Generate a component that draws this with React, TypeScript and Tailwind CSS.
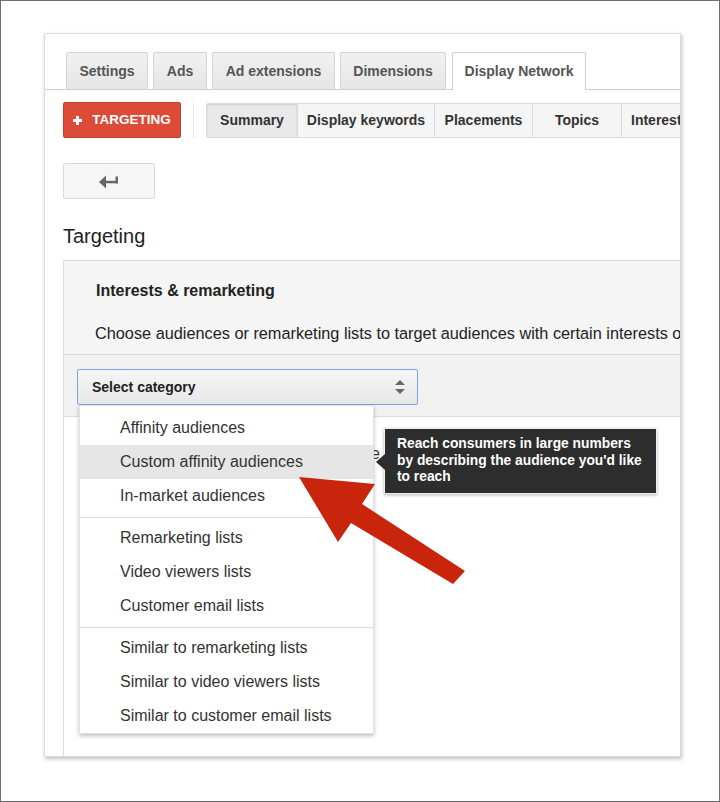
import React from "react";

const tabs = [
  { label: "Settings", w: 82 },
  { label: "Ads", w: 54 },
  { label: "Ad extensions", w: 123 },
  { label: "Dimensions", w: 106 },
];

const segs = [
  { label: "Summary", w: 90, active: true },
  { label: "Display keywords", w: 137 },
  { label: "Placements", w: 98 },
  { label: "Topics", w: 89 },
  { label: "Interests", w: 110 },
];

const groups = [
  ["Affinity audiences", "Custom affinity audiences", "In-market audiences"],
  ["Remarketing lists", "Video viewers lists", "Customer email lists"],
  ["Similar to remarketing lists", "Similar to video viewers lists", "Similar to customer email lists"],
];

export default function App() {
  return (
    <div className="relative w-[720px] h-[802px] bg-white border border-[#6e6e6e] overflow-hidden font-['Liberation_Sans',Arial,sans-serif]">
      <div className="relative ml-[43px] mt-[32px] w-[637px] h-[724px] bg-white border border-[#dcdcdc] shadow-[1px_2px_4px_rgba(0,0,0,0.25)] overflow-hidden">
        {/* Tabs */}
        <div className="flex items-end gap-[5px] pt-[18px] pl-[21px] border-b border-[#cfcfcf] h-[56px]">
          {tabs.map((t) => (
            <div
              key={t.label}
              style={{ width: t.w }}
              className="flex-none h-[37px] flex items-center justify-center rounded-t-[2px] border border-b-0 border-[#d4d4d4] bg-gradient-to-b from-[#f1f1f1] to-[#e6e6e6] text-[14px] font-bold text-[#555]"
            >
              {t.label}
            </div>
          ))}
          <div className="flex-none ml-[1px] w-[134px] h-[38px] -mb-[1px] flex items-center justify-center rounded-t-[2px] border border-b-0 border-[#cfcfcf] bg-white text-[14px] font-bold text-[#555]">
            Display Network
          </div>
        </div>

        {/* Row 2 */}
        <div className="flex items-center pl-[18px] mt-[12px] h-[36px]">
          <div className="flex-none w-[118px] h-[36px] flex items-center justify-center gap-[10px] rounded-[2px] bg-[#dc4a38] border border-[#c9412f] text-white text-[13.5px] font-bold">
            <svg width="9" height="9" viewBox="0 0 9 9">
              <rect x="3" y="0" width="3" height="9" fill="#fff" />
              <rect x="0" y="3" width="9" height="3" fill="#fff" />
            </svg>
            <span>TARGETING</span>
          </div>
          <div className="flex-none ml-[12px] w-[1px] h-[35px] bg-[#e6e6e6]" />
          <div className="flex-none ml-[12px] flex h-[35px] border border-[#dadada] rounded-[2px] bg-[#f5f5f5]">
            {segs.map((s, i) => (
              <div
                key={s.label}
                style={{ width: s.w }}
                className={
                  "flex-none flex items-center justify-center text-[14px] font-bold text-[#333] " +
                  (i > 0 ? "border-l border-[#dadada] " : "") +
                  (s.active ? "bg-[#e9e9e9] shadow-[inset_0_1px_2px_rgba(0,0,0,0.12)]" : "")
                }
              >
                <span className={i === 4 ? "pl-[9px] w-full text-left" : ""}>{s.label}</span>
              </div>
            ))}
          </div>
        </div>

        {/* Back button */}
        <div className="ml-[18px] mt-[25px] w-[92px] h-[36px] flex items-center justify-center rounded-[2px] border border-[#dadada] bg-[#f6f6f6]">
          <svg width="21" height="13" viewBox="0 0 21 13">
            <polygon points="0,7 7,0.5 7,13.5" fill="#666" />
            <rect x="6" y="5.8" width="13" height="2.5" fill="#666" />
            <rect x="16.5" y="1.5" width="2.5" height="6.8" fill="#666" />
          </svg>
        </div>

        {/* Heading */}
        <div className="ml-[18px] mt-[25px] text-[20px] leading-[24px] text-[#222]">Targeting</div>

        {/* Panel */}
        <div className="ml-[18px] mt-[12px] w-[720px] border border-[#dcdcdc] h-[600px]">
          <div className="bg-[#f5f5f5] pt-[20px] pl-[32px] pb-[11px] whitespace-nowrap">
            <div className="text-[16px] leading-[20px] font-bold text-[#222]">Interests &amp; remarketing</div>
            <div className="mt-[22px] -ml-[1px] text-[16.3px] leading-[20px] text-[#222]">
              Choose audiences or remarketing lists to target audiences with certain interests or habits
            </div>
          </div>
          <div className="bg-[#f1f1f1] border-t border-b border-[#dcdcdc] h-[63px] pt-[14px] pl-[13px]">
            <div className="relative w-[341px] h-[36px]">
              <div className="w-full h-full flex items-center justify-between pl-[14px] pr-[12px] rounded-[2px] border border-[#7ba4ea] bg-gradient-to-b from-[#f6f6f6] to-[#e7e7e7] text-[14px] font-bold text-[#222]">
                <span>Select category</span>
                <svg width="10" height="14" viewBox="0 0 10 14">
                  <polygon points="5,0 10,5 0,5" fill="#666" />
                  <polygon points="0,9 10,9 5,14" fill="#666" />
                </svg>
              </div>

              {/* text hidden behind dropdown */}
              <span className="absolute left-[294px] top-[75px] text-[16px] leading-[20px] text-[#333]">e</span>

              {/* Dropdown */}
              <div className="absolute left-[2px] top-[36px] w-[295px] bg-white border border-[#e2e2e2] shadow-[0_2px_4px_rgba(0,0,0,0.25)] pt-[5px] z-10">
                {groups.map((g, gi) => (
                  <div key={gi} className={gi > 0 ? "border-t border-[#dcdcdc] mt-[4px] pt-[3px]" : ""}>
                    {g.map((item) => (
                      <div
                        key={item}
                        className={
                          "h-[34px] flex items-center pl-[40px] text-[16px] text-[#333] whitespace-nowrap " +
                          (item === "Custom affinity audiences" ? "bg-[#e6e6e6]" : "")
                        }
                      >
                        {item}
                      </div>
                    ))}
                  </div>
                ))}

                {/* Tooltip */}
                <div className="absolute left-[304px] top-[22px] w-[273px] h-[66px] bg-[#2d2d2d] border border-[#f0f0f0] shadow-[0_1px_3px_rgba(0,0,0,0.3)] pl-[12px] pt-[7px] text-[13.8px] leading-[16.5px] font-bold text-white whitespace-nowrap">
                  <div className="absolute -left-[9px] top-[25px] w-0 h-0 border-t-[8px] border-b-[8px] border-r-[9px] border-t-transparent border-b-transparent border-r-[#2d2d2d]" />
                  Reach consumers in large numbers
                  <br />
                  by describing the audience you'd like
                  <br />
                  to reach
                </div>
              </div>
            </div>
          </div>
        </div>
      </div>

      {/* Red arrow overlay */}
      <svg className="absolute left-0 top-0 z-20 pointer-events-none" width="720" height="802" viewBox="0 0 720 802">
        <polygon
          points="298,476 374,483 361,503 464,570 452,583 350,522 337,541"
          fill="#c8250c"
        />
      </svg>
    </div>
  );
}
